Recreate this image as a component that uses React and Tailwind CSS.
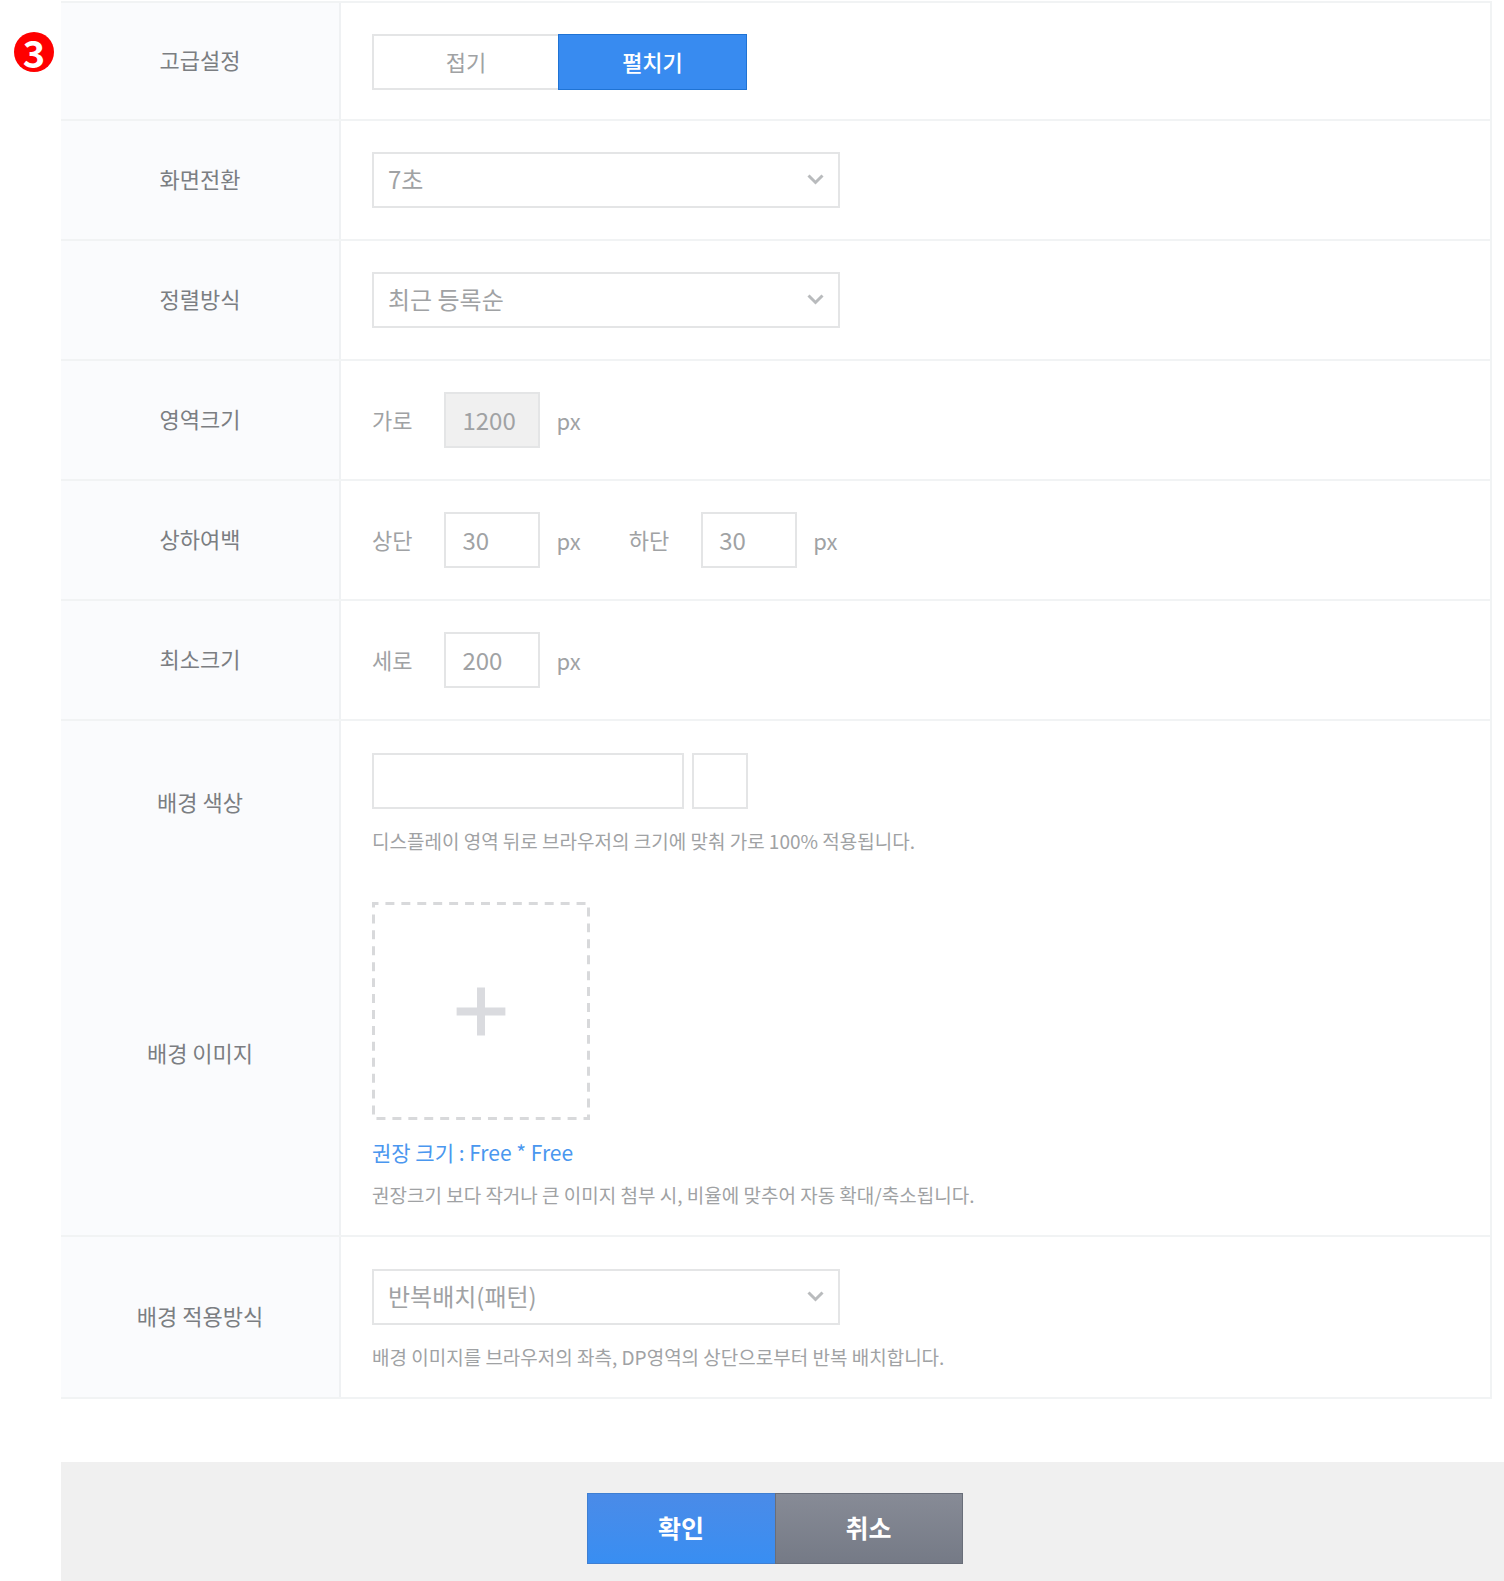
import { useState } from "react";

const initialForm = {
  interval: "7",
  order: "recent",
  width: "1200",
  marginTop: "30",
  marginBottom: "30",
  minHeight: "200",
  bgColor: "",
  bgMode: "repeat",
};

function FormRow({ label, htmlFor, rowClass = "py-[31px]", labelClass = "pb-1", last = true, children }) {
  const LabelTag = htmlFor ? "label" : "span";

  return (
    <div className={`flex ${last ? "border-b-2 border-[#f1f3f4]" : ""}`}>
      <div
        className={`flex w-[280px] shrink-0 items-center justify-center border-r-2 border-[#eff1f3] bg-[#fafbfd] text-[22px] text-[#7b7e82] ${labelClass}`}
      >
        <LabelTag htmlFor={htmlFor}>{label}</LabelTag>
      </div>
      <div className={`min-w-0 flex-1 pl-[31px] ${rowClass}`}>{children}</div>
    </div>
  );
}

function SelectBox({ id, value, onChange, options }) {
  return (
    <div className="relative h-14 w-[468px]">
      <select
        className="h-full w-full appearance-none border-2 border-[#e4e5e6] bg-white px-[14px] pb-0.5 text-2xl text-[#a0a2a4]"
        id={id}
        name={id}
        onChange={onChange}
        value={value}
      >
        {options.map((option) => (
          <option key={option.value} value={option.value}>
            {option.label}
          </option>
        ))}
      </select>
      <svg
        className="pointer-events-none absolute top-[22px] right-4 h-[11px] w-[17px]"
        fill="none"
        viewBox="0 0 17 11"
      >
        <path d="M1.5 1.5L8.5 8.5L15.5 1.5" stroke="#b9bbbd" strokeWidth="3" />
      </svg>
    </div>
  );
}

function PixelInput({ id, label, value, onChange, disabled }) {
  return (
    <div className="flex h-14 items-center text-[22px] text-[#a0a2a4]">
      <label className="mr-8 pb-0.5" htmlFor={id}>
        {label}
      </label>
      <input
        className="mr-4 h-14 w-24 border-2 border-[#e4e5e6] bg-white px-4 pb-0.5 text-2xl disabled:bg-[#f0f0f0]"
        disabled={disabled}
        id={id}
        name={id}
        onChange={onChange}
        type="text"
        value={value}
      />
      <span>px</span>
    </div>
  );
}

function App() {
  const [form, setForm] = useState(initialForm);
  const [isExpanded, setIsExpanded] = useState(true);

  const handleChange = (event) => {
    setForm({
      ...form,
      [event.target.name]: event.target.value,
    });
  };

  return (
    <div className="flex min-h-screen bg-white font-['Noto_Sans_CJK_KR',sans-serif]">
      <div className="w-[61px] shrink-0 pt-8 pl-[14px]">
        <span className="flex h-10 w-10 items-center justify-center rounded-full bg-[#ff0000] text-[38px] leading-10 font-bold text-white">
          3
        </span>
      </div>

      <form className="flex min-w-0 flex-1 flex-col pt-px" onSubmit={(event) => event.preventDefault()}>
        <div className="mr-3 border-t-2 border-r-2 border-[#f1f3f4]">
          <FormRow label="고급설정" rowClass="pt-[31px] pb-[29px]">
            <div className="flex h-14 text-[22px]">
              <button
                className="w-[186px] border-2 border-r-0 border-[#e4e5e6] bg-white pb-0.5 text-[#a0a2a4]"
                onClick={() => setIsExpanded(false)}
                type="button"
              >
                접기
              </button>
              <button
                className="w-[189px] border border-[#1f73d4] bg-[#388bf0] pb-0.5 font-medium text-white"
                onClick={() => setIsExpanded(true)}
                type="button"
              >
                펼치기
              </button>
            </div>
          </FormRow>

          {isExpanded && (
            <>
              <FormRow htmlFor="interval" label="화면전환">
                <SelectBox
                  id="interval"
                  onChange={handleChange}
                  options={[{ value: "7", label: "7초" }]}
                  value={form.interval}
                />
              </FormRow>

              <FormRow htmlFor="order" label="정렬방식">
                <SelectBox
                  id="order"
                  onChange={handleChange}
                  options={[{ value: "recent", label: "최근 등록순" }]}
                  value={form.order}
                />
              </FormRow>

              <FormRow label="영역크기">
                <PixelInput disabled id="width" label="가로" onChange={handleChange} value={form.width} />
              </FormRow>

              <FormRow label="상하여백">
                <div className="flex gap-12">
                  <PixelInput id="marginTop" label="상단" onChange={handleChange} value={form.marginTop} />
                  <PixelInput id="marginBottom" label="하단" onChange={handleChange} value={form.marginBottom} />
                </div>
              </FormRow>

              <FormRow label="최소크기">
                <PixelInput id="minHeight" label="세로" onChange={handleChange} value={form.minHeight} />
              </FormRow>

              <FormRow
                htmlFor="bgColor"
                label="배경 색상"
                labelClass="pt-2"
                last={false}
                rowClass="pt-8 pb-4"
              >
                <div className="flex gap-2">
                  <input
                    className="h-14 w-[312px] border-2 border-[#e4e5e6] px-4 text-2xl text-[#a0a2a4]"
                    id="bgColor"
                    name="bgColor"
                    onChange={handleChange}
                    type="text"
                    value={form.bgColor}
                  />
                  <button
                    aria-label="색상 선택"
                    className="h-14 w-14 border-2 border-[#e4e5e6] bg-white"
                    type="button"
                  />
                </div>
                <p className="mt-4 text-[19px] leading-8 text-[#a0a2a4]">
                  디스플레이 영역 뒤로 브라우저의 크기에 맞춰 가로 100% 적용됩니다.
                </p>
              </FormRow>

              <FormRow label="배경 이미지" rowClass="pt-[29px] pb-6">
                <button
                  aria-label="이미지 첨부"
                  className="flex h-[218px] w-[218px] items-center justify-center"
                  type="button"
                >
                  <svg className="h-full w-full" fill="none" viewBox="0 0 219 219">
                    <path
                      d="M1.5 1.5H217.5V217.5H1.5Z"
                      stroke="#d8d9db"
                      strokeDasharray="9 7"
                      strokeDashoffset="4"
                      strokeWidth="3"
                    />
                    <path d="M85 110H134M109.5 86V134" stroke="#dadbdf" strokeWidth="8" />
                  </svg>
                </button>
                <p className="mt-4 text-[21px] leading-8 text-[#4a97ef]">권장 크기 : Free * Free</p>
                <p className="mt-[11px] text-[19px] leading-8 text-[#a0a2a4]">
                  권장크기 보다 작거나 큰 이미지 첨부 시, 비율에 맞추어 자동 확대/축소됩니다.
                </p>
              </FormRow>

              <FormRow htmlFor="bgMode" label="배경 적용방식" rowClass="pt-8 pb-6">
                <SelectBox
                  id="bgMode"
                  onChange={handleChange}
                  options={[{ value: "repeat", label: "반복배치(패턴)" }]}
                  value={form.bgMode}
                />
                <p className="mt-4 text-[19px] leading-8 text-[#a0a2a4]">
                  배경 이미지를 브라우저의 좌측, DP영역의 상단으로부터 반복 배치합니다.
                </p>
              </FormRow>
            </>
          )}
        </div>

        <div className="mt-[63px] flex flex-1 justify-center bg-[#f0f0f0] pt-[31px] pr-4 pb-4 text-[25px] font-bold text-white">
          <button
            className="h-[71px] w-[188px] border border-r-0 border-[#3f7fd2] bg-linear-to-b from-[#4a8be8] to-[#388ef2] pb-0.5"
            type="submit"
          >
            확인
          </button>
          <button
            className="h-[71px] w-[188px] border border-[#696e79] bg-linear-to-b from-[#878b96] to-[#757a86] pb-0.5"
            type="button"
          >
            취소
          </button>
        </div>
      </form>
    </div>
  );
}

export default App;
